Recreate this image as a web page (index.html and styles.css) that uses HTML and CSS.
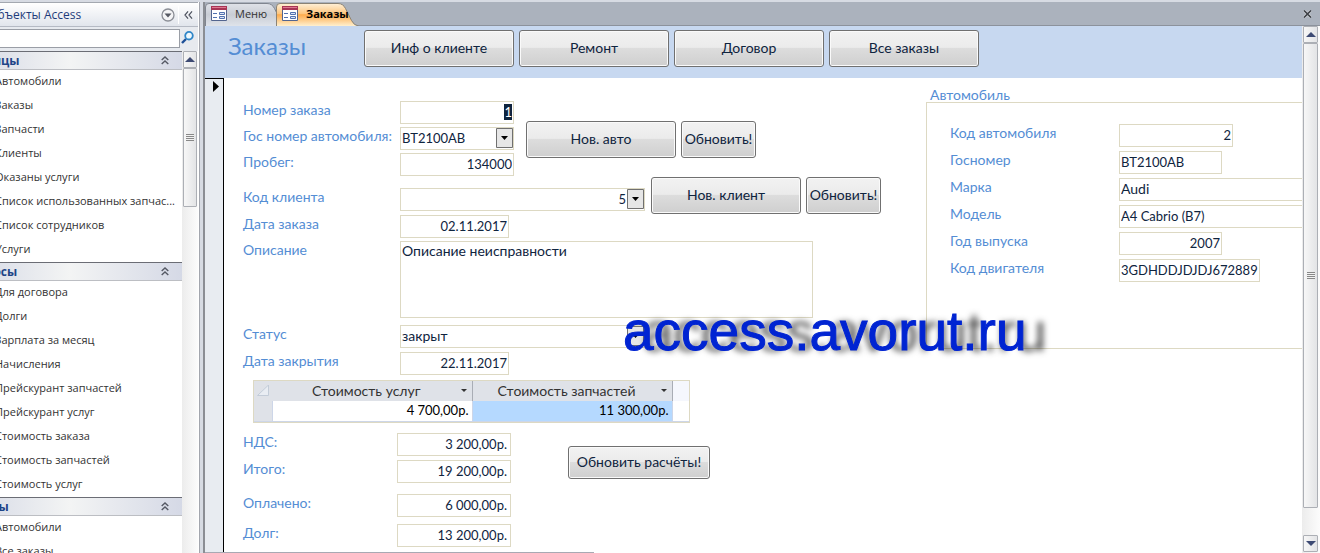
FILE: index.html
```html
<!DOCTYPE html>
<html lang="ru">
<head>
    <meta charset="UTF-8">
    <meta name="viewport" content="width=device-width, initial-scale=1.0">
    <title>Заказы</title>
    <link rel="stylesheet" href="styles.css">
</head>
<body>
    <div class="workspace">
        <!-- Navigation pane -->
        <nav class="nav-pane">
            <div class="nav-header">
                <span class="nav-title">Все объекты Access</span>
                <button class="icon-button" aria-label="Выбор категории">
                    <svg width="14" height="14" viewBox="0 0 14 14"><circle cx="7" cy="7" r="6" fill="#f4f4f6" stroke="#8b8e96" stroke-width="1.3"/><path d="M3.500 5.500h7L7 9.500z" fill="#555862"/></svg>
                </button>
                <button class="icon-button collapse" aria-label="Свернуть">
                    <svg width="9" height="8" viewBox="0 0 10 9"><path d="M4.500 0.500L1 4.500l3.500 4M9 0.500L5.500 4.500l3.500 4" fill="none" stroke="#4b4f5c" stroke-width="1.300"/></svg>
                </button>
            </div>
            <div class="nav-search">
                <input type="text" aria-label="Поиск">
                <button class="icon-button" aria-label="Найти">
                    <svg width="13" height="13" viewBox="0 0 13 13"><path d="M1 12l4-4" stroke="#1c4f97" stroke-width="2.400"/><circle cx="8" cy="4.700" r="3.800" fill="#eef8fd" stroke="#2f86c8" stroke-width="1.800"/></svg>
                </button>
            </div>
            <div class="nav-body">
                <div class="nav-groups">
                    <h2 class="nav-group">Таблицы <svg width="8" height="9" viewBox="0 0 8 9"><path d="M0.700 4L4 1l3.300 3M0.700 8L4 5l3.300 3" fill="none" stroke="#555964" stroke-width="1.400"/></svg></h2>
                    <ul class="nav-list">
                        <li>Автомобили</li>
                        <li>Заказы</li>
                        <li>Запчасти</li>
                        <li>Клиенты</li>
                        <li>Оказаны услуги</li>
                        <li>Список использованных запчас...</li>
                        <li>Список сотрудников</li>
                        <li>Услуги</li>
                    </ul>
                    <h2 class="nav-group">Запросы <svg width="8" height="9" viewBox="0 0 8 9"><path d="M0.700 4L4 1l3.300 3M0.700 8L4 5l3.300 3" fill="none" stroke="#555964" stroke-width="1.400"/></svg></h2>
                    <ul class="nav-list">
                        <li>Для договора</li>
                        <li>Долги</li>
                        <li>Зарплата за месяц</li>
                        <li>Начисления</li>
                        <li>Прейскурант запчастей</li>
                        <li>Прейскурант услуг</li>
                        <li>Стоимость заказа</li>
                        <li>Стоимость запчастей</li>
                        <li>Стоимость услуг</li>
                    </ul>
                    <h2 class="nav-group">Формы <svg width="8" height="9" viewBox="0 0 8 9"><path d="M0.700 4L4 1l3.300 3M0.700 8L4 5l3.300 3" fill="none" stroke="#555964" stroke-width="1.400"/></svg></h2>
                    <ul class="nav-list">
                        <li>Автомобили</li>
                        <li>Все заказы</li>
                    </ul>
                </div>
                <div class="scrollbar">
                    <span class="scroll-button"><svg width="10" height="5" viewBox="0 0 10 5"><path d="M5 0l5 5H0z" fill="#3d4a73"/></svg></span>
                    <span class="scroll-thumb short"></span>
                </div>
            </div>
        </nav>

        <main class="document">
            <div class="tabs">
                <a class="tab" href="#menu">
                    <svg class="tab-shape" width="84" height="23" viewBox="0 0 84 23">
                        <defs><linearGradient id="grayTab" x2="0" y2="1"><stop offset="0" stop-color="#dfe2e8"/><stop offset="0.500" stop-color="#c9cdd5"/><stop offset="1" stop-color="#dfe3ea"/></linearGradient></defs>
                        <path d="M0.500 23V4q0-3.500 3.500-3.500h58q5 0 7.500 5l6 12q2.500 5 7 5.500" fill="url(#grayTab)" stroke="#80858f"/>
                    </svg>
                    <svg class="tab-icon" width="16" height="15" viewBox="0 0 16 15"><path d="M0.500 0.500h15v14h-15z" fill="#fff" stroke="#53658f"/><path d="M0 0h16v4H0z" fill="#a83555"/><path d="M1 1h14v1H1z" fill="#df7990"/><path d="M2 7.500h4M2 11.500h4" stroke="#5272b0"/><path d="M8.500 6.500h5v2h-5zM8.500 10.500h5v2h-5z" fill="#dce6f7" stroke="#5272b0"/></svg>
                    <span>Меню</span>
                </a>
                <a class="tab active" href="#orders">
                    <svg class="tab-shape" width="84" height="23" viewBox="0 0 84 23">
                        <defs><linearGradient id="orangeTab" x2="0" y2="1"><stop offset="0" stop-color="#fff0d8"/><stop offset="0.450" stop-color="#fdc67f"/><stop offset="0.500" stop-color="#fdab4c"/><stop offset="1" stop-color="#fff0cf"/></linearGradient></defs>
                        <path d="M0.500 23V4q0-3.500 3.500-3.500h58q5 0 7.500 5l6 12q2.500 5 7 5.500" fill="url(#orangeTab)" stroke="#8b8375"/>
                    </svg>
                    <svg class="tab-icon" width="16" height="15" viewBox="0 0 16 15"><path d="M0.500 0.500h15v14h-15z" fill="#fff" stroke="#53658f"/><path d="M0 0h16v4H0z" fill="#a83555"/><path d="M1 1h14v1H1z" fill="#df7990"/><path d="M2 7.500h4M2 11.500h4" stroke="#5272b0"/><path d="M8.500 6.500h5v2h-5zM8.500 10.500h5v2h-5z" fill="#dce6f7" stroke="#5272b0"/></svg>
                    <span>Заказы</span>
                </a>
                <button class="icon-button close" aria-label="Закрыть">
                    <svg width="9" height="8" viewBox="0 0 9 8"><path d="M1 0.500l7 7M8 0.500l-7 7" stroke="#fff" stroke-width="3" opacity="0.500"/><path d="M1 0.500l7 7M8 0.500l-7 7" stroke="#3f4248" stroke-width="1.700"/></svg>
                </button>
            </div>

            <div class="document-body">
                <div class="form-view">
                    <header class="form-header">
                        <h1>Заказы</h1>
                        <div class="form-actions">
                            <button class="btn">Инф о клиенте</button>
                            <button class="btn">Ремонт</button>
                            <button class="btn">Договор</button>
                            <button class="btn">Все заказы</button>
                        </div>
                    </header>

                    <div class="record">
                        <div class="record-selector">
                            <svg width="6" height="11" viewBox="0 0 6 11"><path d="M0 0l6 5.500L0 11z" fill="#000"/></svg>
                        </div>
                        <form class="record-form">
                            <div class="order">
                                <div class="block">
                                    <div class="fields order-fields">
                                        <div class="field"><label for="order-id">Номер заказа</label><input class="number" id="order-id" type="text" value="1"></div>
                                        <div class="field"><label for="plate">Гос номер автомобиля:</label>
                                            <span class="combo"><select class="code" id="plate"><option>BT2100AB</option></select><svg width="17" height="20" viewBox="0 0 17 20"><path d="M0.500 0.500h16v19H0.500z" fill="#e6e6e6" stroke="#707070"/><path d="M5 8h7l-3.500 4z" fill="#000"/></svg></span>
                                        </div>
                                        <div class="field"><label for="mileage">Пробег:</label><input class="number" id="mileage" type="text" value="134000"></div>
                                    </div>
                                    <div class="block-actions car-actions">
                                        <button class="btn" type="button">Нов. авто</button>
                                        <button class="btn small" type="button">Обновить!</button>
                                    </div>
                                </div>

                                <div class="block client-block">
                                    <div class="fields client-fields">
                                        <div class="field"><label for="client">Код клиента</label>
                                            <span class="combo wide"><select class="number" id="client"><option>5</option></select><svg width="17" height="20" viewBox="0 0 17 20"><path d="M0.500 0.500h16v19H0.500z" fill="#e6e6e6" stroke="#707070"/><path d="M5 8h7l-3.500 4z" fill="#000"/></svg></span>
                                        </div>
                                        <div class="field"><label for="order-date">Дата заказа</label><input class="number date" id="order-date" type="text" value="02.11.2017"></div>
                                    </div>
                                    <div class="block-actions client-actions">
                                        <button class="btn" type="button">Нов. клиент</button>
                                        <button class="btn small" type="button">Обновить!</button>
                                    </div>
                                </div>

                                <div class="fields details">
                                    <div class="field"><label for="description">Описание</label><textarea id="description">Описание неисправности</textarea></div>
                                </div>
                                <div class="fields closing">
                                    <div class="field"><label for="status">Статус</label>
                                        <span class="combo wide"><select id="status"><option>закрыт</option></select><svg width="17" height="20" viewBox="0 0 17 20"><path d="M0.500 0.500h16v19H0.500z" fill="#e6e6e6" stroke="#707070"/><path d="M5 8h7l-3.500 4z" fill="#000"/></svg></span>
                                    </div>
                                    <div class="field"><label for="close-date">Дата закрытия</label><input class="number date" id="close-date" type="text" value="22.11.2017"></div>
                                </div>

                                <div class="datasheet">
                                    <table>
                                        <thead>
                                            <tr>
                                                <th class="corner"><svg width="12" height="11" viewBox="0 0 12 11"><path d="M0.500 10.500L11.500 0v10.500z" fill="#e9edf3" stroke="#c3ccd8"/></svg></th>
                                                <th><span class="column-title"><span>Стоимость услуг</span><svg width="6" height="3" viewBox="0 0 6 3"><path d="M0 0h6L3 3z" fill="#333"/></svg></span></th>
                                                <th><span class="column-title"><span>Стоимость запчастей</span><svg width="6" height="3" viewBox="0 0 6 3"><path d="M0 0h6L3 3z" fill="#333"/></svg></span></th>
                                                <th class="filler"></th>
                                            </tr>
                                        </thead>
                                        <tbody>
                                            <tr>
                                                <td class="corner"></td>
                                                <td>4 700,00р.</td>
                                                <td class="selected">11 300,00р.</td>
                                                <td class="blank"></td>
                                            </tr>
                                        </tbody>
                                    </table>
                                </div>

                                <div class="block totals-block">
                                    <div class="totals">
                                        <div class="fields">
                                            <div class="field"><label for="vat">НДС:</label><input class="number" id="vat" type="text" value="3 200,00р."></div>
                                            <div class="field"><label for="total">Итого:</label><input class="number" id="total" type="text" value="19 200,00р."></div>
                                        </div>
                                        <div class="fields payments">
                                            <div class="field"><label for="paid">Оплачено:</label><input class="number" id="paid" type="text" value="6 000,00р."></div>
                                            <div class="field"><label for="debt">Долг:</label><input class="number" id="debt" type="text" value="13 200,00р."></div>
                                        </div>
                                    </div>
                                    <button class="btn recalc" type="button">Обновить расчёты!</button>
                                </div>
                            </div>

                            <fieldset class="car">
                                <legend>Автомобиль</legend>
                                <div class="car-box">
                                    <div class="field"><label for="car-id">Код автомобиля</label><input class="number" id="car-id" type="text" value="2"></div>
                                    <div class="field"><label for="car-plate">Госномер</label><input class="code short" id="car-plate" type="text" value="BT2100AB"></div>
                                    <div class="field"><label for="brand">Марка</label><input class="fill" id="brand" type="text" value="Audi"></div>
                                    <div class="field"><label for="model">Модель</label><input class="code fill" id="model" type="text" value="A4 Cabrio (B7)"></div>
                                    <div class="field"><label for="year">Год выпуска</label><input class="number short" id="year" type="text" value="2007"></div>
                                    <div class="field"><label for="engine">Код двигателя</label><input class="code engine" id="engine" type="text" value="3GDHDDJDJDJ672889"></div>
                                </div>
                            </fieldset>

                            <div class="watermark">access.avorut.ru</div>
                        </form>
                    </div>
                    <div class="form-footer"></div>
                </div>

                <div class="scrollbar main-scroll">
                    <span class="scroll-button"><svg width="10" height="5" viewBox="0 0 10 5"><path d="M5 0l5 5H0z" fill="#3d4a73"/></svg></span>
                    <span class="scroll-thumb"></span>
                    <span class="scroll-button"><svg width="10" height="5" viewBox="0 0 10 5"><path d="M0 0h10L5 5z" fill="#3d4a73"/></svg></span>
                </div>
            </div>
        </main>
    </div>

    <script>
        // Select the value of the first field, as Access does on open
        const orderId = document.getElementById('order-id');
        orderId.focus();
        orderId.select();
    </script>
</body>
</html>
```
FILE: styles.css
```css
* {
    box-sizing: border-box;
}

body {
    margin: 0;
    overflow: hidden;
    background-color: #d7dbe3;
    font-family: "Open Sans", "Noto Sans", sans-serif;
    font-size: 11px;
}

h1, h2, ul {
    margin: 0;
    padding: 0;
    font-weight: normal;
}

svg {
    display: block;
    flex: none;
}

button, input, select, textarea {
    font: inherit;
    color: inherit;
}

.workspace {
    display: flex;
    height: 100vh;
    padding-top: 2px;
}

.icon-button {
    display: flex;
    align-items: center;
    justify-content: center;
    padding: 0;
    border: 0;
    background: none;
}

/* Navigation pane: its icon column is scrolled out of the window */
.nav-pane {
    display: flex;
    flex-direction: column;
    flex: none;
    width: 242px;
    margin-left: -42px;
    padding-right: 1px;
    background-color: #fff;
    border-right: 1px solid #a3a6ae;
}

.nav-header {
    display: flex;
    align-items: center;
    height: 25px;
    padding-left: 9px;
    background: linear-gradient(#fff, #e1e5ec);
    border-top: 1px solid #a3a8b0;
    border-bottom: 1px solid #b5bac4;
    color: #1e3c7b;
    font-size: 12px;
}

.nav-title {
    flex: 1;
    white-space: nowrap;
}

.nav-header .collapse {
    width: 20px;
    height: 18px;
    margin-left: 3px;
    border-left: 1px solid #fff;
}

.nav-search {
    display: flex;
    align-items: flex-start;
    height: 24px;
    padding: 2px 3px 2px 0;
    background-color: #e7eaef;
}

.nav-search input {
    flex: 1;
    min-width: 0;
    height: 19px;
    background-color: #fff;
    border: 1px solid #9a9ea6;
}

.nav-search .icon-button {
    width: 15px;
    padding-top: 2px;
}

.nav-body {
    display: flex;
    flex: 1;
    min-height: 0;
}

.nav-groups {
    flex: 1;
    overflow: hidden;
}

.nav-group {
    display: flex;
    align-items: center;
    justify-content: space-between;
    height: 19px;
    padding: 0 13px 0 5px;
    background: linear-gradient(90deg, #d7dbe8, #dfe2ea 20%, #f3f4f4 50%, #d5d9e6);
    border-top: 1px solid #6b6d75;
    border-bottom: 1px solid #bcbec3;
    color: #1e4487;
    font-size: 12px;
    font-weight: bold;
}

.nav-list {
    list-style: none;
}

.nav-list li {
    height: 24px;
    padding-left: 37px;
    color: #333;
    line-height: 22px;
    white-space: nowrap;
}

/* Scrollbars */
.scrollbar {
    display: flex;
    flex-direction: column;
    flex: none;
    width: 16px;
    padding: 0 1px;
    background: linear-gradient(90deg, #ececec, #fcfcfc);
}

.scroll-button, .scroll-thumb {
    display: flex;
    align-items: center;
    justify-content: center;
    flex: none;
    height: 17px;
    background: linear-gradient(90deg, #f7f7f7, #e3e4e6);
    border: 1px solid #acafb5;
    border-radius: 1px;
}

.scroll-thumb.short {
    height: 139px;
}

.scroll-thumb::before {
    content: "";
    width: 8px;
    height: 7px;
    background: repeating-linear-gradient(#888 0 1px, #f2f2f2 1px 2px);
}

.main-scroll {
    width: 18px;
    padding: 0 2px 1px 1px;
}

.main-scroll .scroll-thumb {
    flex: 1;
    margin-bottom: 27px;
}

/* Document window */
.document {
    display: flex;
    flex-direction: column;
    flex: 1;
    min-width: 0;
    margin-left: 3px;
    border-left: 2px solid #8b8e94;
}

.tabs {
    display: flex;
    flex: none;
    height: 24px;
    background-color: #abb2bd;
    border-bottom: 1px solid #8c929c;
}

.tab {
    position: relative;
    display: flex;
    align-items: center;
    gap: 8px;
    width: 71px;
    padding-left: 6px;
    color: #333;
    text-decoration: none;
}

.tab.active {
    color: #000;
    font-weight: bold;
}

.tab-shape {
    position: absolute;
    left: 0;
    top: 1px;
}

.tab-icon, .tab span {
    position: relative;
}

.tab span {
    white-space: nowrap;
}

.tabs .close {
    width: 26px;
    margin-left: auto;
}

.document-body {
    display: flex;
    flex: 1;
    min-height: 0;
}

.form-view {
    display: flex;
    flex-direction: column;
    flex: 1;
    min-width: 0;
    overflow: hidden;
    background-color: #fff;
    font-family: Lato, "Open Sans", sans-serif;
    font-size: 14px;
}

.form-header {
    display: flex;
    align-items: flex-start;
    flex: none;
    height: 52px;
    padding-top: 4px;
    background-color: #c7d8f0;
}

.form-header h1 {
    width: 159px;
    padding-left: 23px;
    color: #548dd4;
    font-size: 24px;
    line-height: 32px;
}

.form-actions {
    display: flex;
    gap: 5px;
}

.btn {
    width: 150px;
    height: 37px;
    padding: 0 0 3px;
    background: linear-gradient(#f2f2f2, #ebebeb 47%, #dddddd 48%, #cfcfcf);
    border: 1px solid #707070;
    border-radius: 3px;
    box-shadow: inset 0 0 0 1px #fafafa;
    color: #0f243e;
    white-space: nowrap;
}

.btn.small {
    width: 75px;
}

.record {
    display: flex;
    flex: 1;
    min-height: 0;
}

.record-selector {
    flex: none;
    width: 19px;
    padding: 2px 0 0 8px;
    background-color: #e8ecf1;
    border-top: 1px solid #000;
    border-right: 1px solid #000;
}

.record-form {
    position: relative;
    display: flex;
    flex: 1;
    min-width: 0;
    overflow: hidden;
    color: #0f243e;
}

.order {
    flex: none;
    width: 702px;
    padding: 23px 0 0 19px;
}

.block {
    display: flex;
    align-items: flex-start;
}

.fields {
    display: flex;
    flex-direction: column;
    gap: 4px;
}

.field {
    display: flex;
    align-items: flex-start;
}

.field label {
    flex: none;
    width: 157px;
    color: #548dd4;
    line-height: 18px;
    white-space: nowrap;
}

.field input, .field select, .field textarea {
    display: block;
    width: 114px;
    height: 23px;
    margin: 0;
    padding: 0 1px 2px;
    background-color: #fff;
    border: 1px solid #ddd9c3;
    border-radius: 0;
    outline: none;
}

.field input::selection {
    background-color: #0f243e;
    color: #fff;
}

.field .number, .field .code {
    font-size: 13px;
}

.field .number {
    text-align: right;
}

.field .date {
    width: 109px;
}

.field .short {
    width: 103px;
}

.field .engine {
    width: 141px;
}

.field .fill {
    flex: 1;
    min-width: 0;
}

.field textarea {
    width: 413px;
    height: 77px;
    resize: none;
    line-height: 18px;
}

.combo {
    position: relative;
    width: 114px;
}

.combo.wide {
    width: 245px;
}

.field .combo select {
    width: 100%;
    appearance: none;
}

.field .combo .number {
    padding-right: 18px;
    text-align-last: right;
}

.combo svg {
    position: absolute;
    top: 1px;
    right: 1px;
    pointer-events: none;
}

.block-actions {
    display: flex;
    gap: 5px;
}

.order-fields {
    gap: 3px;
}

.car-actions {
    margin: 20px 0 0 12px;
}

.client-block {
    margin-top: 1px;
}

.client-fields {
    padding-top: 11px;
}

.client-actions {
    margin-left: 6px;
}

.details {
    margin-top: 3px;
}

.closing {
    margin-top: 7px;
}

/* Subform with the costs */
.datasheet {
    width: 437px;
    height: 43px;
    margin: 5px 0 0 10px;
    overflow: hidden;
    border: 1px solid #ddd9c3;
}

.datasheet table {
    width: 100%;
    border-collapse: collapse;
    table-layout: fixed;
}

.datasheet th, .datasheet td {
    width: 200px;
    height: 20px;
    padding: 0 3px 1px 0;
    line-height: 18px;
}

.datasheet th {
    background-color: #dfe2e8;
    border-right: 1px solid #a9adb5;
    color: #333;
    font-weight: normal;
}

.datasheet td {
    border-right: 1px solid #cdd6e8;
    border-bottom: 1px solid #cdd6e8;
    color: #000;
    font-size: 13px;
    text-align: right;
}

.datasheet .corner {
    width: 18px;
    padding-left: 3px;
    background-color: #dfe2e8;
}

.datasheet th.corner {
    border-right: 0;
}

.datasheet .selected {
    background-color: #b5d9ff;
}

.datasheet .filler {
    width: auto;
    background-color: #f5f7fd;
    border: 0;
}

.datasheet .blank {
    width: auto;
    border-right: 0;
}

.column-title {
    display: flex;
    align-items: center;
    padding-right: 2px;
}

.column-title span {
    flex: 1;
}

.totals-block {
    margin-top: 10px;
}

.totals label {
    width: 154px;
}

.totals input {
    padding-right: 3px;
}

.payments {
    gap: 7px;
    margin-top: 11px;
}

.recalc {
    width: 142px;
    height: 33px;
    margin: 13px 0 0 57px;
}

/* Car group runs past the right edge of the form */
.car {
    flex: 1;
    min-width: 0;
    margin: 8px -20px 0 0;
    padding: 0;
    border: 0;
}

.car legend {
    height: 16px;
    padding: 0 0 0 4px;
    color: #548dd4;
    line-height: 18px;
}

.car-box {
    display: flex;
    flex-direction: column;
    gap: 4px;
    height: 247px;
    padding: 21px 0 0 23px;
    border: 1px solid #ddd9c3;
}

.car-box label {
    width: 169px;
}

.watermark {
    position: absolute;
    top: 221px;
    left: 399px;
    color: #0024d2;
    font-family: "Liberation Sans", Arial, sans-serif;
    font-size: 55px;
    line-height: 64px;
    text-shadow: 20px 1px 6px rgba(0, 0, 0, 0.7);
    -webkit-text-stroke: 1px #0024d2;
    white-space: nowrap;
}

.form-footer {
    flex: none;
    width: 389px;
    height: 1px;
    background-color: #a8a9b3;
}
```
